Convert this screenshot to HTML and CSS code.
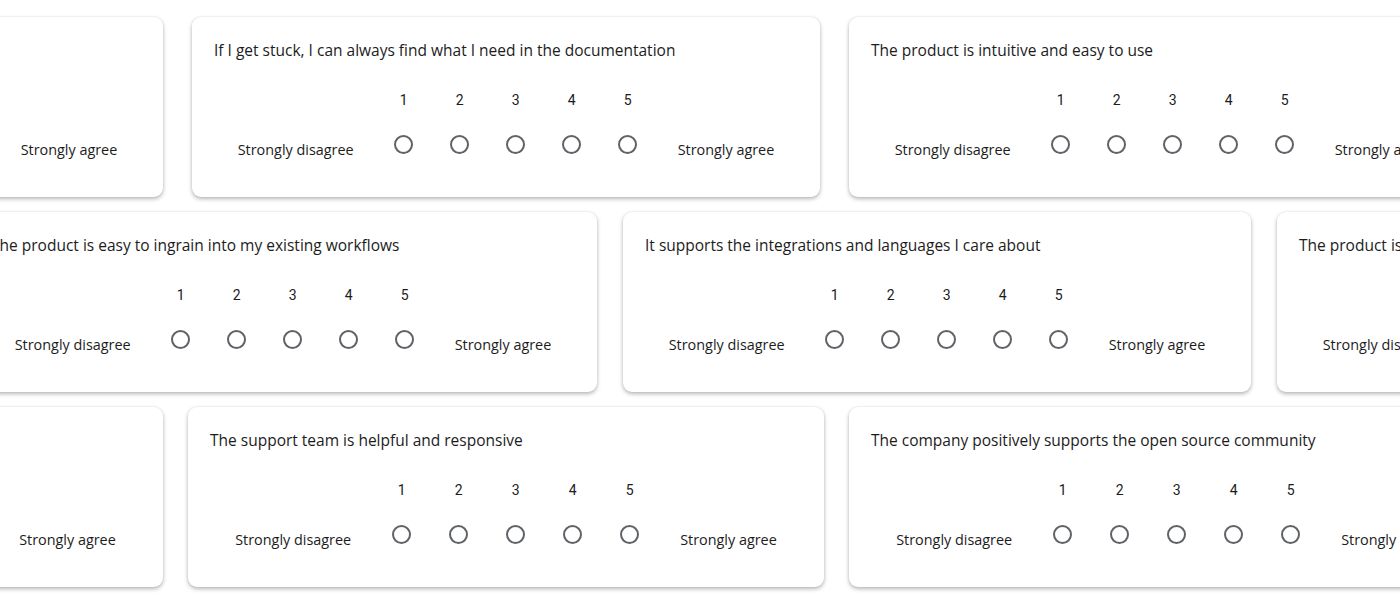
FILE: index.html
```html
<!DOCTYPE html>
<html lang="en">
<head>
<meta charset="utf-8">
<title>Survey wall</title>
<link rel="stylesheet" href="styles.css">
</head>
<body>
<main class="wall">
  <div class="row row-1">
    <section class="card">
      <h3 class="q">The support team is helpful and responsive</h3>
      <div class="scale">
        <span></span><span class="num">1</span><span class="num">2</span><span class="num">3</span><span class="num">4</span><span class="num">5</span><span></span>
        <span class="lbl">Strongly disagree</span><span class="opt"><i class="radio"></i></span><span class="opt"><i class="radio"></i></span><span class="opt"><i class="radio"></i></span><span class="opt"><i class="radio"></i></span><span class="opt"><i class="radio"></i></span><span class="lbl">Strongly agree</span>
      </div>
    </section>
    <section class="card">
      <h3 class="q">If I get stuck, I can always find what I need in the documentation</h3>
      <div class="scale">
        <span></span><span class="num">1</span><span class="num">2</span><span class="num">3</span><span class="num">4</span><span class="num">5</span><span></span>
        <span class="lbl">Strongly disagree</span><span class="opt"><i class="radio"></i></span><span class="opt"><i class="radio"></i></span><span class="opt"><i class="radio"></i></span><span class="opt"><i class="radio"></i></span><span class="opt"><i class="radio"></i></span><span class="lbl">Strongly agree</span>
      </div>
    </section>
    <section class="card">
      <h3 class="q">The product is intuitive and easy to use</h3>
      <div class="scale">
        <span></span><span class="num">1</span><span class="num">2</span><span class="num">3</span><span class="num">4</span><span class="num">5</span><span></span>
        <span class="lbl">Strongly disagree</span><span class="opt"><i class="radio"></i></span><span class="opt"><i class="radio"></i></span><span class="opt"><i class="radio"></i></span><span class="opt"><i class="radio"></i></span><span class="opt"><i class="radio"></i></span><span class="lbl">Strongly agree</span>
      </div>
    </section>
  </div>

  <div class="row row-2">
    <section class="card">
      <h3 class="q">The product is easy to ingrain into my existing workflows</h3>
      <div class="scale">
        <span></span><span class="num">1</span><span class="num">2</span><span class="num">3</span><span class="num">4</span><span class="num">5</span><span></span>
        <span class="lbl">Strongly disagree</span><span class="opt"><i class="radio"></i></span><span class="opt"><i class="radio"></i></span><span class="opt"><i class="radio"></i></span><span class="opt"><i class="radio"></i></span><span class="opt"><i class="radio"></i></span><span class="lbl">Strongly agree</span>
      </div>
    </section>
    <section class="card">
      <h3 class="q">It supports the integrations and languages I care about</h3>
      <div class="scale">
        <span></span><span class="num">1</span><span class="num">2</span><span class="num">3</span><span class="num">4</span><span class="num">5</span><span></span>
        <span class="lbl">Strongly disagree</span><span class="opt"><i class="radio"></i></span><span class="opt"><i class="radio"></i></span><span class="opt"><i class="radio"></i></span><span class="opt"><i class="radio"></i></span><span class="opt"><i class="radio"></i></span><span class="lbl">Strongly agree</span>
      </div>
    </section>
    <section class="card">
      <h3 class="q">The product is intuitive and easy to use</h3>
      <div class="scale">
        <span></span><span class="num">1</span><span class="num">2</span><span class="num">3</span><span class="num">4</span><span class="num">5</span><span></span>
        <span class="lbl">Strongly disagree</span><span class="opt"><i class="radio"></i></span><span class="opt"><i class="radio"></i></span><span class="opt"><i class="radio"></i></span><span class="opt"><i class="radio"></i></span><span class="opt"><i class="radio"></i></span><span class="lbl">Strongly agree</span>
      </div>
    </section>
  </div>

  <div class="row row-3">
    <section class="card">
      <h3 class="q">The product is intuitive and easy to use</h3>
      <div class="scale">
        <span></span><span class="num">1</span><span class="num">2</span><span class="num">3</span><span class="num">4</span><span class="num">5</span><span></span>
        <span class="lbl">Strongly disagree</span><span class="opt"><i class="radio"></i></span><span class="opt"><i class="radio"></i></span><span class="opt"><i class="radio"></i></span><span class="opt"><i class="radio"></i></span><span class="opt"><i class="radio"></i></span><span class="lbl">Strongly agree</span>
      </div>
    </section>
    <section class="card">
      <h3 class="q">The support team is helpful and responsive</h3>
      <div class="scale">
        <span></span><span class="num">1</span><span class="num">2</span><span class="num">3</span><span class="num">4</span><span class="num">5</span><span></span>
        <span class="lbl">Strongly disagree</span><span class="opt"><i class="radio"></i></span><span class="opt"><i class="radio"></i></span><span class="opt"><i class="radio"></i></span><span class="opt"><i class="radio"></i></span><span class="opt"><i class="radio"></i></span><span class="lbl">Strongly agree</span>
      </div>
    </section>
    <section class="card">
      <h3 class="q">The company positively supports the open source community</h3>
      <div class="scale">
        <span></span><span class="num">1</span><span class="num">2</span><span class="num">3</span><span class="num">4</span><span class="num">5</span><span></span>
        <span class="lbl">Strongly disagree</span><span class="opt"><i class="radio"></i></span><span class="opt"><i class="radio"></i></span><span class="opt"><i class="radio"></i></span><span class="opt"><i class="radio"></i></span><span class="opt"><i class="radio"></i></span><span class="lbl">Strongly agree</span>
      </div>
    </section>
  </div>
</main>
</body>
</html>
```

FILE: styles.css
```css
html, body {
  margin: 0;
  padding: 0;
  background: #ffffff;
}

body {
  width: 1400px;
  height: 606px;
  overflow: hidden;
  font-family: "Open Sans", "Noto Sans", sans-serif;
  color: #1c1c1c;
}

.wall {
  display: flex;
  flex-direction: column;
  gap: 15px;
  padding-top: 17px;
}

.row {
  display: flex;
  gap: 29px;
}

.row-1 {
  margin-left: -465px;
}

.row-2 {
  margin-left: -31px;
  gap: 26px;
}

.row-3 {
  margin-left: -473px;
  gap: 25px;
}

.card {
  flex: none;
  width: 628px;
  height: 180px;
  box-sizing: border-box;
  padding: 22px 22px 0;
  background: #ffffff;
  border-radius: 9px;
  box-shadow: 0 2px 4px rgba(0, 0, 0, 0.28), 0 0 2px rgba(0, 0, 0, 0.1);
}

.row-3 .card {
  width: 636px;
}

.q {
  margin: 0;
  font-size: 15.5px;
  line-height: 23px;
  font-weight: 400;
  white-space: nowrap;
}

.scale {
  display: grid;
  grid-template-columns: auto repeat(5, 56px) auto;
  grid-template-rows: 24px 40px;
  row-gap: 12px;
  justify-content: center;
  margin-top: 26px;
}

.row-3 .scale {
  grid-template-columns: auto repeat(5, 57px) auto;
}

.num {
  text-align: center;
  font-family: Roboto, "Liberation Sans", sans-serif;
  font-size: 14px;
  line-height: 24px;
}

.lbl {
  align-self: center;
  padding: 12px 22px 0;
  font-size: 14.4px;
  line-height: 20px;
  text-align: center;
  white-space: nowrap;
}

.opt {
  display: flex;
  align-items: center;
  justify-content: center;
}

.radio {
  display: block;
  width: 19px;
  height: 19px;
  box-sizing: border-box;
  border: 2px solid #5f6368;
  border-radius: 50%;
}
```
